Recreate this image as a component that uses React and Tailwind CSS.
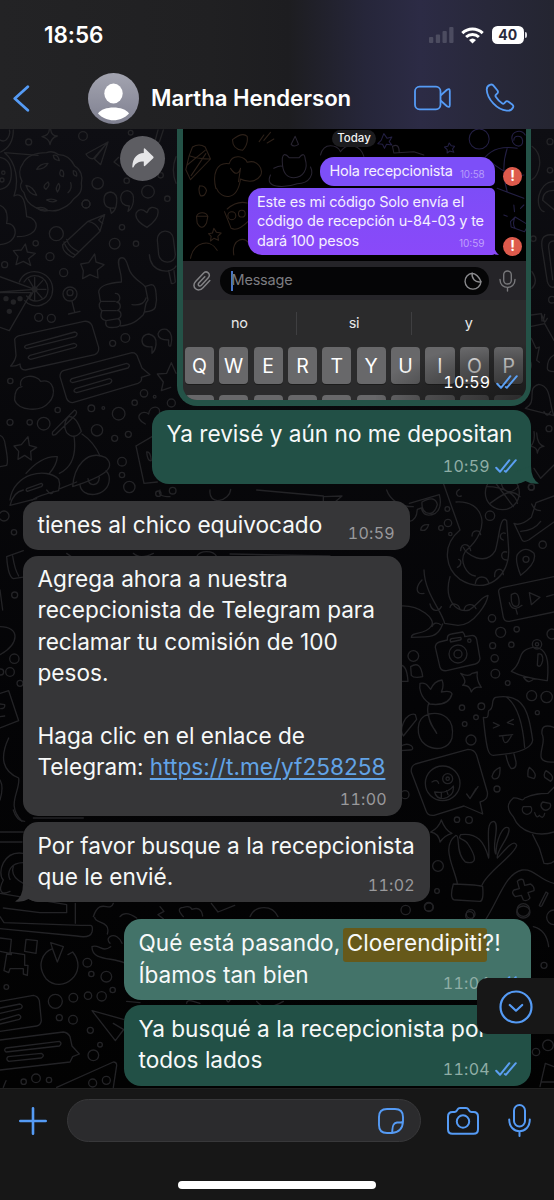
import React from "react";

const BLUE = "#559bf5";

function Ticks({ className = "" }) {
  return (
    <svg className={`h-[14px] w-[22px] shrink-0 ${className}`} viewBox="0 0 22 14" fill="none" stroke="#5b9ff2" strokeWidth="2" strokeLinecap="round" strokeLinejoin="round">
      <path d="M1.2 8.8 5 12.8 14.4 1.2" />
      <path d="M9.8 12 10.800 12.800 20.800 1.2" />
    </svg>
  );
}

function Stamp({ time, mine, className = "" }) {
  return (
    <div className={`flex h-4 items-center justify-end gap-[5px] ${className}`}>
      <span className={`text-[16px] leading-4 tabular-nums tracking-[0.3px] ${mine ? "text-[#8fada5]" : "text-[#99999c]"}`}>{time}</span>
      {mine && <Ticks />}
    </div>
  );
}

function Line({ className = "", children }) {
  return <div className={`h-[31.3px] whitespace-nowrap text-[22.6px] leading-[31.3px] text-[#f7f9f9] ${className}`}>{children}</div>;
}

function Wallpaper() {
  return (
    <svg className="absolute inset-0 h-full w-full" viewBox="0 129 554 959" fill="none" stroke="#232326" strokeLinecap="round" strokeLinejoin="round">
      <g transform="translate(0 120) scale(.33333)" strokeWidth="4">
        <path d="M40 30c0 30-12 54-38 66M0 60c22 12 32-20 28-30M14 98c34 28 44 86 28 130M42 228c28-14 34 20 38 62 40 4 44 60-28 60M0 256c20 8 24 30 20 54 36 0 38 60-20 64M14 98l100 8" />
        <path d="M68 132c14-30 50-34 72-34 14-6 28 0 36 6 24 0 40 18 48 34 18 10 26 32 20 52 4 24-8 36-24 48-12 18-26 24-44 32-20 6-54 0-70-8-18-8-30-24-34-44-12-10-12-24-6-34-10-20-8-40 2-52z" />
        <path d="M110 148q10-18 34-18-8 18-34 18zM182 150q12 0 8 20-16-2-8-20zM220 152q12 0 10 16-12 0-10-16zM78 196q20 2 32 30-24-4-32-30zM144 186q8 8-6 22-14-8 6-22zM176 190q8 10-4 26-8-12 4-26zM212 188q6 16-8 30M140 240q16-6 30 2-14 8-30-2zM160 106q14-4 18 16-18-2-18-16zM110 264q20-6 34 8-20 4-34-8z" />
        <path d="M148 28q0 18-22 22 22 6 24 24 4-22 22-26-18 0-20-20" />
        <circle cx="86" cy="66" r="9" /><circle cx="249" cy="48" r="13" /><circle cx="293" cy="190" r="17" /><circle cx="258" cy="252" r="12" />
        <circle cx="444" cy="215" r="19" /><circle cx="502" cy="236" r="8" /><circle cx="380" cy="182" r="8" /><circle cx="392" cy="38" r="7" /><circle cx="482" cy="166" r="8" /><circle cx="10" cy="158" r="5" /><circle cx="6" cy="180" r="6" />
        <path d="M324 66 258 102q8 16 22 14zM324 66l-22 68-18-16M284 116l34-44M490 30l-12 36q-8 4-12-6l8-30M356 112l-14 14 16 12M528 110q-16 40 0 80" />
        <path d="M0 112q34 6 34 50 0 40-34 46" />
      </g>
      <g transform="translate(0 200) scale(.33333)" strokeWidth="4">
        <path d="M342 24q-30 4-30-26 0-20 20-22 22 4 18 32-2 24-16 32l-4-16M388 18q-26 0-26-26 2-18 20-20 22 4 18 34-4 22-16 28z" />
        <path d="M441 82q-40-22-32-44 12-18 32 0 10-26 32-10 8 26-32 54zM314 44l-50 20-76 70q-2 24 32 38l80-78zM264 64q26 4 36 30M312 44l-16 16q8 8 12 10M200 118q6 22 34 36M192 126q8 26 32 38" />
        <path d="M76 132l6 24 24 4-20 16 6 20-22-12-22 10 6-24-14-18 24-2zM284 162l4 24 24 8-20 16 2 24-24-10-22 12 2-24-8-20 24-4z" />
        <path d="M472 120c0-34 44-36 48-4l6 48c0 30-46 30-50 0zM448 164c4 58 70 58 80 34M506 212l8 38q8 2 12-4l-4-34" />
        <circle cx="169" cy="101" r="21" /><circle cx="344" cy="131" r="16" /><circle cx="258" cy="12" r="12" /><circle cx="366" cy="82" r="8" /><circle cx="408" cy="131" r="8" /><circle cx="107" cy="130" r="8" /><circle cx="150" cy="170" r="12" /><circle cx="191" cy="218" r="12" /><circle cx="14" cy="194" r="9" />
        <path d="M58 246c20-52 100-34 100 22 0 50-60 64-84 34M72 246c20-34 72-20 72 22 0 36-44 46-64 20M0 230l104 38L0 276M0 278h94l-66 114-28-10M104 268v-36M104 268l24-26M104 268h34M104 268l22 26M104 268v34M104 268l-18-30M104 268l-16 28" />
        <circle cx="104" cy="268" r="7" /><g fill="#222225" stroke="none"><circle cx="18" cy="296" r="8" /><circle cx="40" cy="306" r="8" /><circle cx="60" cy="296" r="8" /><circle cx="28" cy="334" r="8" /></g>
        <circle cx="210" cy="282" r="21" /><circle cx="210" cy="278" r="9" /><path d="M216 304l8 32M206 342l34-8" />
        <path d="M364 246c4-24-20-66-2-72 18-6 20 24 28 40 12 24 34 32 46 46l8 40c-14 14-4 26-14 44-20 20-34 30-68 34M364 246c-40 4-66 10-68 30 4 12 2 22 6 28-8 10-4 22 4 28-8 20 0 28 12 30-4 20 8 22 24 20 28 0 20-22 12-26 14-4 10-26-2-24 14-8 10-24-2-26 14 0 12-26-4-26M302 304h44M304 332h44M318 362l36-6M434 260l20-6q12 0 14 24 4 22-2 44-4 12-32 14M396 314q36 4 42-20" />
        <path d="M44 418q4-10 18-12l190-42q16-2 24 12l20 66q2 16-12 22L76 510q-16 0-16-18-14 8-28 6 14-16 16-32zM78 436l146-40q14 4 2 14L80 446q-12-4-2-10zM90 466l132-36q14 4 4 12L92 478q-14-4-2-12z" />
        <path d="M190 512l206-54q14 0 18 16l12 30 24 20-26 8q4 12-10 18l-196 58q-12 0-18-12l-20-66q0-14 10-18zM216 536l164-46q14 4 4 14L218 548q-14-4-2-12zM226 566l102-30q14 4 2 14L230 578q-14-4-4-12z" />
        <circle cx="116" cy="352" r="12" /><circle cx="154" cy="355" r="12" /><circle cx="338" cy="430" r="9" /><circle cx="376" cy="414" r="13" />
        <path d="M62 556c-6-34 48-34 60-12 40-10 50 40 24 64-24 30-92 24-102-8 0-18 4-38 22-40M456 440q-30 4-30-20 2-16 20-18 26 6 22 32-2 18-12 26zM506 420q-32 0-32-18 6-18 26-14 22 14 12 50-8 4-6-18zM528 520l-14-32-14 32-28 2 18 24-6 26 28-10" />
        <circle cx="31" cy="543" r="8" /><circle cx="173" cy="630" r="8" /><circle cx="274" cy="625" r="10" /><circle cx="310" cy="624" r="4" /><circle cx="356" cy="641" r="19" /><circle cx="432" cy="580" r="11" /><circle cx="404" cy="608" r="8" /><circle cx="464" cy="590" r="4" /><circle cx="514" cy="609" r="12" /><circle cx="131" cy="671" r="19" /><circle cx="89" cy="667" r="8" /><circle cx="30" cy="667" r="9" /><circle cx="291" cy="691" r="17" /><circle cx="344" cy="715" r="9" /><circle cx="385" cy="703" r="9" /><circle cx="366" cy="785" r="13" /><circle cx="366" cy="825" r="8" /><circle cx="388" cy="861" r="17" /><circle cx="475" cy="881" r="8" /><circle cx="518" cy="872" r="10" />
        <path d="M436 672c-40-20-8-46 10-30 4-30 38-24 32-4M84 710l4 26 22 6-18 12 2 26-20-14-20 12 2-24-14-16 22-4zM0 706q14 6 16 30 10 50 4 60l-20 4M158 696l66-66q10 4 2 16l-60 58q-12 4-8-8zM206 650q22-4 38 44-22 28-44 4-14-26 6-48zM222 708q12 86-44 112M246 702q36 24 54 66" />
        <path d="M218 860c4-60 42-112 98-88 40 34-18 62-98 88zM240 852c0 46 88 42 88-16 0-14-6-20-10-24M264 836c4 26 32 22 34-4M78 820q48-54 94-50-2 26-24 50M30 900c10-80 110-100 146-62 8 20-2 30 0 34q-60 14-80 28M80 866l44-16q8 4 0 10l-42 14q-6-4-2-8zM180 866l50-20M408 738l48-28M408 738l24 112 40-4M440 756q12-2 14 26-12 2-14-26" />
      </g>
      <g transform="translate(0 490) scale(.33333)" strokeWidth="4">
        <path d="M30 46q10-40 40-46M30 46l80-20M140 0q14 20 20 4M480 0q-10 20 30 20M630 0c-6 50 60 34 62-2M770 0l200 18v14M970 20l56-2-28 24M1160 0c10 30 40 50 80 50M20 200l50-18M20 200q4 60 20 66l40-6M38 198q6 40 18 60" />
        <circle cx="12" cy="78" r="15" /><circle cx="42" cy="127" r="8" /><circle cx="44" cy="315" r="9" /><circle cx="43" cy="506" r="14" /><circle cx="30" cy="546" r="13" /><circle cx="60" cy="580" r="9" /><circle cx="2" cy="546" r="9" />
        <path d="M0 300l8 60M0 410c60 0 60 50 0 84M0 610l26-8 30 90-56 22M0 642l14 2q2 12-12 12M0 680l14-2M26 744c-28 60-18 100 30 120 6 40-40 80 10 130M0 870q12 20 0 60M200 190l20 14M400 190q20 20 60 0M590 200c10-20 50-20 60 0M690 192l300 6" />
      </g>
      <g transform="translate(400 480) scale(.33333)" strokeWidth="4">
        <circle cx="307" cy="38" r="51" /><path d="M260 20c60 0 90 30 92 50M306-12c-10 50 30 60 50 30M270 70c30-20 60-50 90-20M280 0l60 80M28 70l90-26q10 40-12 56-34 16-42-16l-12 4q-2 34-24 36M66 66q40-22 46 8-10 34-34 24-14-8-12-32zM62 150q2-18 24-16-6 22-24 16z" />
        <path d="M130 10l50 140c-60 50-40 120 0 148 80 50 150-10 146-90l-6-86c-20-20-22 50-34 90-30 50-90 10-96-10M168 66c84-6 110 80 28 148-20 30 4 70 30 74M150 290c-20 70 20 110 58 100 30-20 36-40 56-44-2 20-40 90-90 90l-40-6c-10-40-60-90-62-160M0 378c60-4 110 40 94 60-20 30-60 14-60 34 60 0 80 0 94-40M178 28c-16 10-6 24 6 20M216 168c0-20 24-20 26-4M182 212c0-26 26-22 30 0M226 310c4-26 34-24 40-2M284 290c-2-26 26-30 26-6M320 240c-20 0-20-30 0-24M310 180c-16-6-8-26 6-20M172 262c12-4 14-22 4-24M150 382c4-16 26-12 30 6M192 392c2-22 28-24 36-6M90 372c6 24 26 24 34 8M66 300c-20 20-20 46 6 40M96 440c4-14 18-12 26-6" />
        <circle cx="144" cy="129" r="11" /><circle cx="270" cy="107" r="14" /><circle cx="123" cy="144" r="7" /><circle cx="142" cy="87" r="7" /><circle cx="151" cy="162" r="5" /><circle cx="428" cy="194" r="11" /><circle cx="394" cy="22" r="9" />
        <path d="M342 130q20 10 52-18l14-44 54-20M342 130l24 50q4 8 20 0l76-54M362 154q40-2 60-30M395 72q8 20 26 20M362 286q-18-46-10-62 22-30 50-4 10 28-40 66z" /><circle cx="378" cy="238" r="9" />
        <path d="M462 290l-152 32q-16 4-14 14l14 76q4 14 18 12l134-28M334 344q18-12 22 10 6 30-14 24-10-6-8-34zM328 368q10 30 38 8M348 388l4 14M388 338l32 14-26 22zM440 350l20-6" />
        <circle cx="276" cy="415" r="11" /><circle cx="302" cy="457" r="15" /><circle cx="350" cy="448" r="8" /><circle cx="278" cy="497" r="9" /><circle cx="334" cy="494" r="8" /><circle cx="284" cy="535" r="11" /><circle cx="286" cy="581" r="13" /><circle cx="323" cy="609" r="7" /><circle cx="456" cy="462" r="15" /><circle cx="395" cy="647" r="15" /><circle cx="440" cy="651" r="17" /><circle cx="412" cy="698" r="6" />
        <path d="M118 486l24-6q-2-16 12-18l34-6q8 10 6 14l24-4q10 2 12 12l10 58q-2 12-14 16l-86 20q-16 2-20-10l-14-60q0-12 12-16zM154 476l28-4q4 6-2 8l-28 6q-4-6 2-10z" /><circle cx="174" cy="522" r="27" /><circle cx="174" cy="522" r="12" /><circle cx="208" cy="482" r="5" />
        <path d="M334 574c40-30 10-60 64-72 44-2 50 40 44 100-30-4-70-8-108-28zM370 590q14 26 32 6M414 522q16-4 14 20-6 24-16 14z" /><circle cx="411" cy="493" r="14" /><circle cx="411" cy="493" r="5" />
        <path d="M182 580q24 12 34 0 10-2 16-4-4 24 12 46-22-4-30 14-6-22-26-20 16-12-6-36zM88 670c-30-20-30-50-28-60 20-4 24 10 32 18 8-20 20-26 34-28 8 20 0 30-2 36 20-4 30-2 32 6-8 30-40 34-68 30zM86 670c-10 30 4 60 24 90-8-20-22-20-24-56-40 6-40 70-10 90 30 20 70 14 80-20 10-60-30-80-70-72" />
        <circle cx="40" cy="528" r="16" /><path d="M0 556q20-4 24 48H0M32 560q30-20 36 30-26 6-34-4zM46 704c-10-6-30 6-36 24-10 24-4 32 0 40l40-50zM0 800c30-20 50 10 30 10l-30 2" />
        <circle cx="186" cy="683" r="8" /><circle cx="244" cy="679" r="10" /><circle cx="228" cy="712" r="7" /><circle cx="194" cy="732" r="7" /><circle cx="213" cy="780" r="15" /><circle cx="291" cy="927" r="9" />
        <path d="M286 652c90-16 100 50 112 128-2 20-30 40-118 46-14 0-20-10-30-114 20 4 12-10 16-20 20-8 4-30 20-40zM320 652c40 30 50 100 54 150M318 826q6 30 16 40 16 0 14-20l-6-24M280 728l18 8-18 8M340 718l-18 10 18 6M298 768l40-4M308 768q4 40 26 0M462 742q-40-14-36 20c20 30-40 90 38 84" />
        <path d="M46 852l158-44q20 0 26 18l32 110q4 24-22 30l8 36-56-24-90 28q-20 2-24-14l-44-116q-2-18 12-24z" /><circle cx="128" cy="910" r="52" /><circle cx="143" cy="896" r="15" /><circle cx="143" cy="896" r="5" />
        <path d="M96 906q16-10 20 4M104 936q40 6 56-18 4 30-30 38-22 0-26-20zM124 938v14M140 932l4 12M200 942l10 14 18-30M214 950l20-30M276 890q4-20 24-28 2 40-20 34zM384 890q-2-20 4-28 26 20 14 34zM434 892q-4-12 4-20 30 18 14 32z" />
        <circle cx="171" cy="1019" r="8" /><circle cx="207" cy="1020" r="10" /><circle cx="15" cy="944" r="12" /><circle cx="114" cy="1158" r="16" /><circle cx="111" cy="1233" r="7" /><circle cx="87" cy="1282" r="13" /><circle cx="209" cy="1307" r="12" /><circle cx="17" cy="1290" r="14" />
        <path d="M124 1020q-8 24-32 36 24 4 28 30 14-20 36-26-20-8-32-40M340 1010c-20-20-20-40 0-56 20-2 26 14 34 0 30-14 50-14 70-14l18-18M340 1010c20 50 80 60 122 46M398 1064l20 40 14 46q20 4 30-6M370 980a14 14 0 1 0 22 0zM428 966a14 14 0 1 0 22 4zM404 998q6 20 14 8 12 14 16-6" />
        <path d="M172 1210c-10-50-50-110-4-144 14 0-4 50 28 80 40 10 30-20 8-54-10-20-34-10-22-28 50-6 70 20 84 70 4-40-12-110 16-110 20 10-10 80 6 98 0-40 20-90 38-78 10 20-40 70-34 90 20-20 50-60 58-38-6 30-90 80-104 120M160 1212q-14 50 8 48l70 4q14 2 10-44-10-6-88-8zM256 1320c40-60 60-140 110-150 40-4 50 30 96 40M352 1204q10-10 18-4l4 16 18-4q12 8 10 20l-18 6 6 16q-8 12-20 6l-6-14-18 4q-14-12-4-20l16-4zM438 1236l-20 40q4 6 8 0l18-36zM350 1296a20 18 0 1 0 40 0 20 18 0 1 0-40 0" />
      </g>
      <g transform="translate(0 810) scale(.33333)" strokeWidth="4">
        <path d="M0 66h70M0 96h66M70 130c-60-10-80 60-60 80-20 40 0 44 20 34M70 158c-40 0-50 30-40 50M40 170q-10 30 30 50M40 0q10 34 34 34M100 24h150M0 250l200 34v24h-80l-110-14M200 284v24M226 280v60M0 320l12 18 230 8h30q8 2 4 20-6 20-46 12L0 356M280 320c20-60 50-10 60-40M284 322c0 20 50 10 38 50M360 320q16-20 50 4M330 400c-20-20 20-40 36 0M276 410c20-10 30 20 56 0M276 412c0 40 60 30 96 46" />
        <path d="M0 384l34 4-4 42-30-6M78 388l34 4-4 38-34-6zM34 428l40 6v32h10l-2 30-12-4v-16H30l-4 12-14-6 8-50 14 2zM204 434l14-8c50 60-30 130-80 80-30-40-10-80 20-90M152 398l6 20 14 38 18-46zM480 290l12 14-18 10 16 12" />
        <circle cx="262" cy="458" r="13" /><circle cx="274" cy="492" r="8" /><circle cx="319" cy="500" r="16" /><circle cx="338" cy="540" r="8" /><circle cx="19" cy="531" r="7" /><circle cx="166" cy="574" r="21" /><circle cx="220" cy="563" r="13" /><circle cx="264" cy="557" r="11" /><circle cx="305" cy="559" r="14" /><circle cx="178" cy="623" r="9" /><circle cx="219" cy="629" r="13" /><circle cx="271" cy="661" r="9" /><circle cx="300" cy="704" r="7" /><circle cx="280" cy="736" r="16" /><circle cx="71" cy="815" r="8" /><circle cx="108" cy="805" r="13" /><circle cx="147" cy="810" r="8" /><circle cx="278" cy="819" r="12" /><circle cx="319" cy="811" r="12" />
        <path d="M0 574l100-18q14 2 18 16l6 60q-2 14-14 16L0 664M0 594l60-12q12 6 2 14L0 610M0 630l56-16q12 6 2 14L0 642M0 690l190-24q14 2 20 14l6 28 22 24-20 8-8 16L0 780M18 714l160-20q10 6 0 14L18 726q-8-6 0-12zM24 740l100-10q12 6 0 14L26 754q-10-6-2-14zM276 602l94 26M276 602l70 90 24-32M340 640l30 18M170 832l170-76q10 0 10 10l-10 66M10 832l8-20M550 320q-24-26 0-28 20-6 26 6 28-10 32 20M634 280l20 26 50-20M750 320a46 46 0 0 1 84 0M380 574l40 4M560 580q0-12 20-6l20 6M680 570q4 12 10 0M770 574c20 26 50 18 80 0" />
      </g>
      <g transform="translate(494 125) scale(.33333)" strokeWidth="4">
        <circle cx="168" cy="50" r="9" /><circle cx="168" cy="136" r="8" /><circle cx="118" cy="341" r="8" /><circle cx="174" cy="524" r="10" /><circle cx="165" cy="911" r="9" /><circle cx="112" cy="1086" r="9" />
        <path d="M114 64c40 30 20 90 0 100M180 170c-50 0-60 80-30 90M180 196q-34 0-34 30l34 28M180 330c-40-6-40 20-34 50l14 90q6 20 20 16M180 348q-18 0-16 20l12 96M114 440q20 30 0 50M112 570l30-4 10 26M112 604l40-8 28 50M142 566l2 22M152 568l-4 20M160 580l-6 10M112 640l14 30 10-4-8 40 8 6M94 850c40-20 0-60 40-72 40 4 30 60 46 94zM120 920q4 30-10 44 20 2 20 20 4-20 20-20-20-4-22-40M120 1030l20 30 40-40M100 700q16 10 10 30M180 690q-20 10-20 40 0 10 20 10M150 860q10 20 20 0" />
      </g>
      <g transform="translate(400 810) scale(.33333)" strokeWidth="4">
        <circle cx="86" cy="290" r="13" /><circle cx="212" cy="312" r="13" /><circle cx="370" cy="300" r="19" /><circle cx="432" cy="466" r="9" /><circle cx="444" cy="706" r="16" /><circle cx="408" cy="726" r="11" />
        <path d="M400 350q40 10 46 60M462 300a22 22 0 1 0 0 44M436 760l-16 70M436 760l26 10M426 816h36" />
      </g>
    </svg>
  );
}

function PhotoDoodles() {
  return (
    <svg className="absolute inset-0 h-full w-full" viewBox="182.5 129 343 132" fill="none">
      <g transform="translate(170 125) scale(.33333)" strokeWidth="3.2" strokeLinecap="round" strokeLinejoin="round">
        <g stroke="#2d2119">
          <path d="M56 92l10-26q20-12 38 0l16 36-60 62-14-30zM56 92q30 10 64 10M50 120l54-44M62 152l44-66M88 182q16 0 20 14-4 20-18 16-8-16-2-30M136 190c-10-40 0-80 40-74 10-34 50-20 54-4 30-10 50 20 40 40-20 30-60 10-60 10-10 70-60 60-72 28M180 130q20 30 30 0M210 130l-6 40M186 44q30-24 44-10 4 24-14 42-30-4-30-32zM266 50l14-20M280 46l20-24M290 54l20-12" />
          <path d="M78 274a18 16 0 0 1 34 0l-4 20q-14 26-28 0zM78 274h34M170 252q30-26 60-18M162 260l20 50q20 10 50-20M130 310l8 12 14 2-10 10 2 12-14-6-10 8 2-14-8-8 12-2zM60 400c10-50 60-60 80-24M190 390c-10-50 40-60 46-30" /><circle cx="184" cy="272" r="12" /><circle cx="214" cy="266" r="10" />
        </g>
        <g stroke="#282431">
          <path d="M336 120c-4-40 10-34 20-22h30q16-20 18 4c10 30-6 56-34 56q-30 0-34-38zM300 150c-20 40 40 40 80 26 40 0 50-30 40-50M310 130q20-10 26-6M362 58l12-24 10 24q-14 10-22 0zM450 90c10-40 50-30 60-10 20-30 60-20 70 14M670 84l60-4 30 10M670 84l-4-20q20-10 20 16" />
        </g>
        <g stroke="#231f43">
          <circle cx="926" cy="42" r="30" /><path d="M1030 46c0-16 24-16 26 0 4 24-30 24-32-6 0-24 30-28 40-10M920 160c10-80 60-100 120-90M960 110q60 50 100 40M1010 70q-20 60 0 130M980 190l80 30M1020 290l14-14 40 24-12 20-40-14zM1034 276q-10 20 0 34M1030 240l2 20M1050 250l10-10M1000 270l10 4M836 54l6 8 10 2-6 8 4 10-12-4-8 6v-10l-8-8 10-2zM640 26l10 14 14-4-8 14 8 10-16-2-6 12-6-12-14-2 10-10z" />
        </g>
      </g>
    </svg>
  );
}

function ErrorDot({ className = "" }) {
  return <span className={`flex h-[19px] w-[19px] items-center justify-center rounded-full bg-[#dd5a4c] text-[14px] font-bold leading-none text-white ${className}`}>!</span>;
}

function Key({ children }) {
  return <div className="flex h-[37px] flex-1 items-center justify-center rounded-[4px] bg-[#68686a] pt-[2px] text-[19.5px] leading-none text-white shadow-[0_1px_0_#1c1c1c]">{children}</div>;
}

function Photo() {
  return (
    <div className="relative flex h-[277px] w-[354px] flex-col overflow-hidden rounded-b-[20px] bg-[#245247] px-[5.5px] pb-[6px]">
      <div className="relative flex h-[271px] flex-col overflow-hidden rounded-b-[14px] bg-[#2b2b2c]">
        <div className="relative h-[132px] shrink-0 bg-black">
          <PhotoDoodles />
          <div className="relative flex flex-col">
            <div className="mt-px flex h-[17px] w-[44px] items-center justify-center self-center rounded-full bg-[#1c1c1f] text-[11.5px] font-medium leading-none text-[#f2f2f2]">Today</div>
            <div className="mt-[10px] flex items-center justify-end gap-[8.5px] pr-[3.5px]">
              <div className="flex h-[29px] w-[174.5px] justify-between rounded-[14px] rounded-br-[5px] bg-[#7d4ff8] pl-[9.5px] pr-[10px]">
                <span className="whitespace-nowrap text-[14.5px] leading-[27px] tracking-[-0.25px] text-[#f5efff]">Hola recepcionista</span>
                <span className="text-[9.8px] leading-[35px] tracking-[-0.1px] text-[#b79cfb]">10:58</span>
              </div>
              <ErrorDot className="mt-[9px]" />
            </div>
            <div className="mt-[1.5px] flex items-end justify-end gap-[8.5px] pr-[3.5px]">
              <div className="relative flex h-[67px] w-[247px] flex-col rounded-[14px] rounded-br-[3px] rounded-tr-[5px] bg-gradient-to-b from-[#7d4df7] to-[#8a49f9] pl-[9.5px] pt-[4.5px] text-[14.5px] leading-[19.4px] tracking-[-0.16px] text-[#f5efff]">
                <span className="whitespace-nowrap">Este es mi código Solo envía el</span>
                <span className="whitespace-nowrap">código de recepción u-84-03 y te</span>
                <span className="flex items-end justify-between whitespace-nowrap pr-[10px]">
                  <span>dará 100 pesos</span>
                  <span className="relative top-[3px] text-[10px] tracking-normal text-[#c0a0fc]">10:59</span>
                </span>
                <svg className="absolute -right-[4px] bottom-0 h-[9px] w-[12px]" viewBox="0 0 12 9"><path d="M0 9V5l7-5q1 6 5 9-4 0-7-2Q3 9 0 9z" fill="#8a49f9" /></svg>
              </div>
              <ErrorDot className="-mb-px" />
            </div>
          </div>
        </div>
        <div className="flex h-[39px] shrink-0 items-center bg-[#252428] pl-[9px] pr-[8px]">
          <svg className="h-[22px] w-[20px]" viewBox="0 0 20 22" fill="none" stroke="#828285" strokeWidth="1.5" strokeLinecap="round"><path d="M17.8 10.5 11 17.8c-5 5.4-12.3-.8-7.4-6.2L11.2 3.4c3.3-3.6 8.4.8 5.1 4.4L9.4 15.2c-1.8 1.9-4.3-.2-2.6-2.1l6-6.4" /></svg>
          <div className="ml-[8px] flex h-[28px] w-[269px] items-center rounded-full bg-[#050506] pl-[11px] pr-[6.5px]">
            <span className="h-[20px] w-[2px] bg-[#4a77c9]" />
            <span className="-ml-px flex-1 text-[14.5px] leading-none tracking-[-0.2px] text-[#7c7c80]">Message</span>
            <svg className="h-[18px] w-[18px]" viewBox="0 0 18 18" fill="none" stroke="#8a8a8d" strokeWidth="1.4"><path d="M8.2 1.2A8 8 0 1 0 17 9.8C11 11 7.300 6 8.200 1.200zM8.200 1.200Q14 2 17 9.800" /></svg>
          </div>
          <svg className="ml-[10px] h-[22px] w-[17px]" viewBox="0 0 17 22" fill="none" stroke="#77777a" strokeWidth="1.4" strokeLinecap="round"><rect x="4.700" y="1" width="7.600" height="13" rx="3.800" /><path d="M1 9.500c0 10.500 15 10.500 15 0M8.500 17.500V21" /></svg>
        </div>
        <div className="flex h-[47px] shrink-0 items-center text-[14.5px] leading-none tracking-[-0.2px] text-[#e8e8e8]">
          <span className="flex-1 text-center">no</span><i className="h-[23px] w-px bg-[#3f3f41]" />
          <span className="flex-1 text-center">si</span><i className="h-[23px] w-px bg-[#3f3f41]" />
          <span className="flex-1 text-center">y</span>
        </div>
        <div className="flex shrink-0 gap-[5.3px] px-[2.3px]">
          {"QWERTYUIOP".split("").map((k) => <Key key={k}>{k}</Key>)}
        </div>
        <div className="mt-[11px] flex shrink-0 gap-[5.3px] px-[2.3px]">
          {"ASDFGHJKL;".split("").map((k) => <Key key={k} />)}
        </div>
        <div className="absolute bottom-0 right-0 h-[56px] w-[150px] bg-[radial-gradient(ellipse_at_bottom_right,rgba(20,20,20,0.75),rgba(20,20,20,0.3)_50%,transparent_72%)]" />
        <div className="absolute bottom-[10px] right-[8px] flex items-center gap-[5px] text-[16px] leading-4 tabular-nums tracking-[0.3px] text-white">10:59<Ticks /></div>
      </div>
    </div>
  );
}

function Header() {
  return (
    <header className="flex h-[129px] shrink-0 flex-col bg-[linear-gradient(90deg,#232325_0%,#202022_38%,#1d1d20_52%,#26263a_66%,#2c2b45_76%,#28283a_88%,#242531_100%)] pt-[17px]">
      <div className="flex h-9 items-center pl-[44px] pr-[27px]">
        <span className="flex-1 text-[22.5px] font-semibold leading-none tracking-[-0.05px] text-white">18:56</span>
        <svg className="h-[16px] w-[25px]" viewBox="0 0 25 16" fill="#4c4c60"><rect y="10" width="4.300" height="6" rx="1" /><rect x="6.800" y="7.500" width="4.300" height="8.500" rx="1" /><rect x="13.500" y="4" width="4.300" height="12" rx="1" /><rect x="20.200" width="4.300" height="16" rx="1" /></svg>
        <svg className="ml-[7px] h-[17px] w-[23px]" viewBox="0 0 23 17" fill="none" stroke="#fff" strokeWidth="3"><path d="M1.300 6.200c5.800-5.600 14.600-5.600 20.400 0M5.100 10c3.700-3.400 9.100-3.400 12.800 0" /><path d="M11.500 16.500 8 13q3.500-3 7 0z" fill="#fff" stroke="none" /></svg>
        <span className="ml-[8px] flex h-[18px] w-[32.500px] items-center justify-center rounded-[5.500px] bg-white text-[14px] font-bold leading-none tracking-[0.1px] text-[#2a2a3c]">40</span>
        <span className="ml-[1px] h-[6px] w-[2px] rounded-r-full bg-[#d8d8de]" />
      </div>
      <div className="mt-[14px] flex h-[62px] items-center pl-[13px] pr-[40px]">
        <svg className="h-[27px] w-[17px]" viewBox="0 0 17 27" fill="none" stroke={BLUE} strokeWidth="2.800" strokeLinecap="round" strokeLinejoin="round"><path d="M14.800 1.700 1.800 13.500l13 11.800" /></svg>
        <svg className="ml-[58px] h-[51px] w-[51px]" viewBox="0 0 51 51">
          <defs>
            <linearGradient id="avatar" x2="0" y2="1"><stop stopColor="#a3a4b0" /><stop offset="1" stopColor="#7f8090" /></linearGradient>
          </defs>
          <circle cx="25.500" cy="25.500" r="25.500" fill="url(#avatar)" />
          <ellipse cx="25.500" cy="20.500" rx="9.200" ry="10" fill="#fff" />
          <path d="M10 40.500c5-8 26-8 31 0-8 9-23 9-31 0z" fill="#fff" />
        </svg>
        <h1 className="ml-[12px] flex-1 whitespace-nowrap text-[22.2px] font-semibold leading-none tracking-[-0.02px] text-white">Martha Henderson</h1>
        <svg className="h-[26px] w-[37px]" viewBox="0 0 37 26" fill="none" stroke={BLUE} strokeWidth="1.800" strokeLinejoin="round"><rect x="1" y="1.700" width="25.500" height="22.600" rx="4.500" /><path d="M26.500 10.500 33 4.800q2.800-1.800 2.800 1.200v14q0 3-2.800 1.200l-6.500-5.700" /></svg>
        <svg className="ml-[34px] mr-[-1px] mt-[-2px] h-[29px] w-[30px]" viewBox="0 0 30 30" fill="none" stroke={BLUE} strokeWidth="1.900" strokeLinejoin="round"><path d="M4.600 1.900C2.600 2.600 1.200 4.400 1.300 7c.4 9.600 10.800 20.700 20.600 21.600 2.800.2 5.300-.8 6.600-3.300.5-1 .3-2-.5-2.700l-4.200-3.200c-1.200-.9-2.400-.7-3.300.3l-1 1.100c-.7.700-1.600.8-2.400.2-2.800-2-4.800-4.200-6.500-6.800-.5-.8-.3-1.700.4-2.300l1-.9c1.100-1 1.200-2 .4-3.200L8.700 3.300C7.700 1.700 6.200 1.300 4.600 1.900z" /></svg>
      </div>
    </header>
  );
}

function Footer() {
  return (
    <footer className="flex h-[112px] shrink-0 flex-col border-t border-[#202020] bg-[#171717]">
      <div className="mt-[10px] flex h-[43px] items-center pl-[19px] pr-[23px]">
        <svg className="h-[28px] w-[28px]" viewBox="0 0 28 28" stroke={BLUE} strokeWidth="2.600" strokeLinecap="round"><path d="M14 1.300v25.400M1.300 14h25.400" /></svg>
        <div className="ml-[20px] flex h-[43px] w-[354px] items-center justify-end rounded-full border border-[#38383a] bg-[#2b2b2d] pr-[16px]">
          <svg className="h-[26px] w-[26px]" viewBox="0 0 26 26" fill="none" stroke={BLUE} strokeWidth="1.900" strokeLinejoin="round"><path d="M14 25H9Q1 25 1 17V9q0-8 8-8h8q8 0 8 8v4.500Q24.500 24 14 25zM14 25c1-3-1-9.500 5-10.500h3.500q2 0 2.500-1" /></svg>
        </div>
        <svg className="ml-[26px] h-[28px] w-[32px]" viewBox="0 0 32 28" fill="none" stroke={BLUE} strokeWidth="2" strokeLinejoin="round"><path d="M1 9.500Q1 5 5.500 5h2q1.500 0 2.200-1.300L10.500 2.400Q11.300 1 13 1h6q1.700 0 2.500 1.400l.8 1.300Q23 5 24.500 5h2Q31 5 31 9.500v12.700q0 4.500-4.500 4.500h-21Q1 26.700 1 22.200z" /><circle cx="16" cy="14.500" r="6.200" /></svg>
        <svg className="ml-[29px] h-[33px] w-[23px]" viewBox="0 0 23 33" fill="none" stroke={BLUE} strokeWidth="2" strokeLinecap="round"><rect x="6" y="1" width="11" height="21.500" rx="5.500" /><path d="M1.200 15.500c0 15.500 20.600 15.500 20.600 0M11.500 27.500V32" /></svg>
      </div>
      <div className="ml-[178px] mt-[39px] h-[8px] w-[198px] rounded-full bg-white" />
    </footer>
  );
}

export default function App() {
  return (
    <div className="flex h-[1200px] w-[554px] flex-col overflow-hidden bg-black font-['Inter','Liberation_Sans',sans-serif]">
      <Header />
      <main className="relative flex h-[959px] shrink-0 flex-col overflow-hidden bg-[linear-gradient(180deg,#0e0e13_0%,#08080b_30%,#040406_60%,#020202_100%)] pl-[23px] pr-[23px]">
        <Wallpaper />
        <div className="relative flex items-start justify-end gap-[12px]">
          <div className="mt-[6.500px] flex h-[45px] w-[45px] items-center justify-center rounded-full bg-[#5d5d62]">
            <svg className="h-[20px] w-[22px]" viewBox="0 0 22 20" fill="#e6e6e8"><path d="M11.800 1.300q0-1.800 1.400-.6l8 7.700q.8.900 0 1.800l-8 7.600q-1.400 1.100-1.400-.6v-3.600C6 13.600 3.500 15.600 1.600 19 .9 20 .2 19.700.3 18.500.8 10 4.800 5.400 11.800 5z" /></svg>
          </div>
          <Photo />
        </div>
        <div className="relative mt-[4px] flex h-[74px] w-[379px] flex-col self-end rounded-[17px] bg-[#225046] pl-[14.500px] pr-[14px] pt-[8.400px]">
          <Line>Ya revisé y aún no me depositan</Line>
          <Stamp time="10:59" mine className="mt-[8px]" />
          <svg className="absolute -right-[8px] bottom-0 h-[18px] w-[24px]" viewBox="0 0 24 18"><path d="M0 18V6L16 0q0 13 8 17.500-8 1-13.500-2.500Q5 18 0 18z" fill="#225046" /></svg>
        </div>
        <div className="relative mt-[17px] flex h-[49px] w-[387px] flex-col rounded-[15px] bg-[#363638] pl-[14.500px] pr-[15px] pt-[8px]">
          <Line>tienes al chico equivocado</Line>
          <Stamp time="10:59" className="-mt-[15px]" />
        </div>
        <div className="relative mt-[5.700px] flex h-[260.600px] w-[379px] flex-col rounded-[15px] bg-[#363638] pl-[14.500px] pr-[15px] pt-[7.400px]">
          <Line>Agrega ahora a nuestra</Line>
          <Line>recepcionista de Telegram para</Line>
          <Line>reclamar tu comisión de 100</Line>
          <Line>pesos.</Line>
          <Line />
          <Line>Haga clic en el enlace de</Line>
          <Line>Telegram: <a className="text-[#62a3e6] underline decoration-[1.500px] underline-offset-[3px]">https://t.me/yf258258</a></Line>
          <Stamp time="11:00" className="mt-[9px]" />
        </div>
        <div className="relative mt-[5.700px] flex h-[80px] w-[407px] flex-col rounded-[15px] bg-[#363638] pl-[14.500px] pr-[15px] pt-[7.700px]">
          <Line>Por favor busque a la recepcionista</Line>
          <Line>que le envié.</Line>
          <Stamp time="11:02" className="-mt-[15px]" />
          <svg className="absolute -left-[8px] bottom-0 h-[18px] w-[24px]" viewBox="0 0 24 18"><path d="M24 18V6L8 0q0 13-8 17.500 8 1 13.500-2.500Q19 18 24 18z" fill="#363638" /></svg>
        </div>
        <div className="relative mt-[17.300px] flex h-[81px] w-[407px] flex-col self-end rounded-[17px] bg-[#437369] pl-[14.500px] pr-[14px] pt-[8px]">
          <Line className="tracking-[0.08px]">Qué está pasando, <span className="-mx-[4px] rounded-[3px] bg-[#66591a] px-[4px] pb-[6px] pt-px">Cloerendipiti</span>?!</Line>
          <Line>Íbamos tan bien</Line>
          <Stamp time="11:04" mine className="-mt-[15px]" />
        </div>
        <div className="relative mt-[5px] flex h-[80.500px] w-[407px] flex-col self-end rounded-[17px] bg-[#225046] pl-[14.500px] pr-[14px] pt-[7.700px]">
          <Line>Ya busqué a la recepcionista por</Line>
          <Line>todos lados</Line>
          <Stamp time="11:04" mine className="-mt-[15px]" />
        </div>
        <div className="absolute right-0 top-[849px] flex h-[56px] w-[77px] items-center rounded-l-[10px] bg-[#171717] pl-[22px]">
          <svg className="mt-[2px] h-[34px] w-[34px]" viewBox="0 0 34 34" fill="none" stroke={BLUE} strokeWidth="2.200" strokeLinecap="round" strokeLinejoin="round"><circle cx="17" cy="17" r="15.500" /><path d="M10.800 15 17 20.700 23.200 15" /></svg>
        </div>
      </main>
      <Footer />
    </div>
  );
}
